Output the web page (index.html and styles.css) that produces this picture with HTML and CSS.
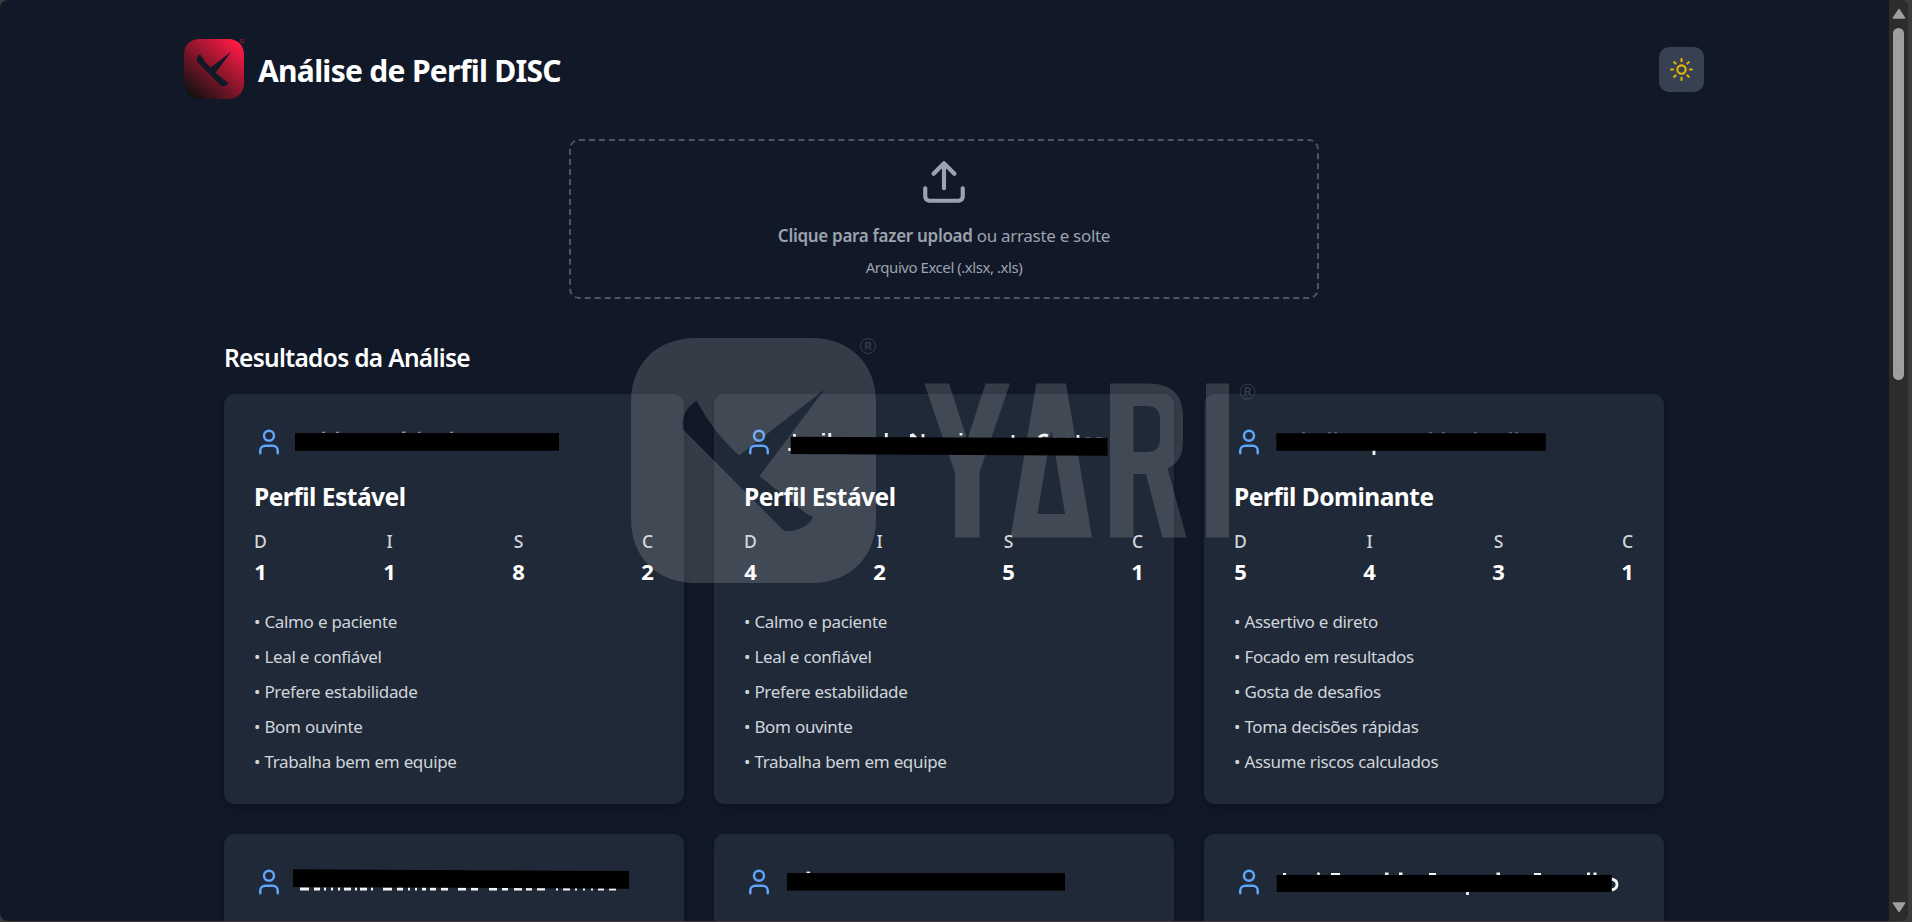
FILE: index.html
```html
<!DOCTYPE html>
<html lang="pt-BR">
<head>
<meta charset="utf-8">
<title>Análise de Perfil DISC</title>
<link rel="stylesheet" href="styles.css">
</head>
<body>
<svg class="defs" aria-hidden="true">
  <defs>
    <linearGradient id="brand" x1="0.12" y1="0.95" x2="0.88" y2="0.08">
      <stop offset="0" stop-color="#111111"/><stop offset="1" stop-color="#fb1a44"/>
    </linearGradient>
    <path id="mark" fill-rule="evenodd" d="M64 0H181C219 0 245 26 245 64V181C245 219 219 245 181 245H64C26 245 0 219 0 181V64C0 26 26 0 64 0ZM65.600 62.700C55 69 50 80 52 91.300L152.500 192.500C165 195 178 188 182 179.300Q176 177 170 171.500L128.500 138L193 52L108 117.500Q82 94 65.600 62.700Z"/>
    <symbol id="user" viewBox="0 0 24 24"><path d="M19 21v-2a4 4 0 0 0-4-4H9a4 4 0 0 0-4 4v2"/><circle cx="12" cy="7" r="4"/></symbol>
  </defs>
</svg>
<div class="window">
  <main class="page">
    <header class="header">
      <div class="brand">
        <svg class="brand-logo" viewBox="0 0 245 245"><use href="#mark" fill="url(#brand)"/><circle cx="237" cy="8" r="7" fill="none" stroke="#6b1830" stroke-width="6"/></svg>
        <h1 class="title">Análise de Perfil DISC</h1>
      </div>
      <button class="theme" aria-label="Tema"><svg viewBox="0 0 24 24"><circle cx="12" cy="12" r="4"/><path d="M12 2v2M12 20v2M4.930 4.930l1.410 1.410M17.660 17.660l1.410 1.410M2 12h2M20 12h2M6.340 17.660l-1.410 1.410M19.070 4.930l-1.410 1.410"/></svg></button>
    </header>
    <section class="upload">
      <svg class="upload-icon" viewBox="0 0 24 24"><path d="M21 15v4a2 2 0 0 1-2 2H5a2 2 0 0 1-2-2v-4M17 8l-5-5-5 5M12 3v12"/></svg>
      <p class="upload-text"><b>Clique para fazer upload</b> ou arraste e solte</p>
      <p class="upload-hint">Arquivo Excel (.xlsx, .xls)</p>
    </section>
    <section class="results">
      <h2 class="results-title">Resultados da Análise</h2>
      <div class="grid">
        <article class="card">
          <div class="person"><svg class="person-icon"><use href="#user"/></svg>
            <svg class="redacted" viewBox="0 0 370 35"><path class="trace" d="M38 8.800h3M52 8.800h3M118 8.500h3.500M134 8.800h2.500M166 8.800h3"/><path d="M11 9h264v17.700H11z"/></svg></div>
          <h3 class="profile">Perfil Estável</h3>
          <div class="scores"><div><span>D</span><b>1</b></div><div><span>I</span><b>1</b></div><div><span>S</span><b>8</b></div><div><span>C</span><b>2</b></div></div>
          <ul class="traits"><li>• Calmo e paciente</li><li>• Leal e confiável</li><li>• Prefere estabilidade</li><li>• Bom ouvinte</li><li>• Trabalha bem em equipe</li></ul>
        </article>
        <article class="card">
          <div class="person"><svg class="person-icon"><use href="#user"/></svg>
            <svg class="redacted" viewBox="0 0 370 35"><path class="trace bright" d="M20.500 10v4M49.500 9v2.500M55.800 9v5M112.300 9v5M137.500 10v4M138 10l4 4M149 10v4M187 9v2.500M239 11v3M265 13.500q4-4 9-1.500M304 11v3M14.300 25.500h2.500"/><path class="trace dim" d="M279 14h5M291 14h5M311 14h6M322 14h6"/><path d="M16.700 12.700L333.700 14V31.700L16.700 30z"/></svg></div>
          <h3 class="profile">Perfil Estável</h3>
          <div class="scores"><div><span>D</span><b>4</b></div><div><span>I</span><b>2</b></div><div><span>S</span><b>5</b></div><div><span>C</span><b>1</b></div></div>
          <ul class="traits"><li>• Calmo e paciente</li><li>• Leal e confiável</li><li>• Prefere estabilidade</li><li>• Bom ouvinte</li><li>• Trabalha bem em equipe</li></ul>
        </article>
        <article class="card">
          <div class="person"><svg class="person-icon"><use href="#user"/></svg>
            <svg class="redacted" viewBox="0 0 370 35"><path class="trace dim" d="M38 9h3M64 9h3M70 9h3M165 9h3M178 9h3M210 9h3M245 9h3M251 9h3"/><path class="trace bright" d="M110 26v5"/><path d="M12.300 9.300h269.500v17.500h-269.500z"/></svg></div>
          <h3 class="profile">Perfil Dominante</h3>
          <div class="scores"><div><span>D</span><b>5</b></div><div><span>I</span><b>4</b></div><div><span>S</span><b>3</b></div><div><span>C</span><b>1</b></div></div>
          <ul class="traits"><li>• Assertivo e direto</li><li>• Focado em resultados</li><li>• Gosta de desafios</li><li>• Toma decisões rápidas</li><li>• Assume riscos calculados</li></ul>
        </article>
        <article class="card"><div class="person"><svg class="person-icon"><use href="#user"/></svg>
          <svg class="redacted" viewBox="0 0 370 35"><path class="trace bright" d="M16 25h9M30 25h6M40 25h2M47 25h2M54 25h2M60 25h7M71 25h2M76 25h7M87 25h2M99 25h9M113 25h6M124 25h2M131 25h2M138 25h4M146 25h6M157 25h7M174 25h8M187 25h7M205 25h8M218 25h6M230 25h8M242 25h6M253 25h8M272 25h2M279 25h7M291 25h2M299 25h2M307 25h2M314 25h6M325 25h7"/><path d="M9 5.300L345 7V24.700L9 23z"/></svg></div></article>
        <article class="card"><div class="person"><svg class="person-icon"><use href="#user"/></svg>
          <svg class="redacted" viewBox="0 0 370 35"><path class="trace bright" d="M32.500 9h3.500"/><path d="M13 9h278v17.500H13z"/></svg></div></article>
        <article class="card"><div class="person"><svg class="person-icon"><use href="#user"/></svg>
          <svg class="redacted" viewBox="0 0 370 35"><path class="trace bright" d="M19 10.500h3M53.500 10.500l2-1.500M67 10.500h9M121 10h3.500M135 10h3.500M165 10.500h7M232.500 10h3.500M270 10.500h7M323 10h3M329.500 10h3M203.500 27v4M347.500 15q5.500 1 5.500 5.500t-5.500 5.500"/><path d="M12.700 11h335v17h-335z"/></svg></div></article>
      </div>
    </section>
  </main>
  <svg class="watermark" viewBox="631 338 626 245" aria-hidden="true">
    <use href="#mark" x="631" y="338"/>
    <path fill-rule="evenodd" d="M924.300 383.500H949L967.300 440L985.500 383.500H1010L979.500 472V537.500H955V473ZM1036.300 383.500H1066L1092 537.500H1010.500ZM1051.400 430L1037.500 514H1065ZM1110 383.500H1148C1172 383.500 1183 395 1183 417V440C1183 455 1179 463 1167.500 468.500L1186.500 537.500H1162.500L1146 474H1133.500V537.500H1110ZM1133.500 406V452H1146C1156 452 1160 448 1160 438V420C1160 410 1156 406 1146 406ZM1206 383.500H1229V537.500H1206Z"/>
    <g class="registered"><circle cx="868" cy="346" r="7.500"/><text x="868" y="349.500">R</text><circle cx="1247.500" cy="391.700" r="7.500"/><text x="1247.500" y="395.200">R</text></g>
  </svg>
  <aside class="scrollbar" aria-hidden="true">
    <svg viewBox="0 0 12 10"><path d="M6 1L11 8.500H1z"/></svg>
    <i class="thumb"></i>
    <svg class="down" viewBox="0 0 12 10"><path d="M6 9L11 1.500H1z"/></svg>
  </aside>
</div>
</body>
</html>
```
FILE: styles.css
```css
* { box-sizing: border-box; margin: 0; padding: 0; }
body { background: #3b3b3b; font-family: "Segoe UI", "Noto Sans", "Open Sans", sans-serif; color: #fff; height: 922px; overflow: hidden; }
.defs { position: absolute; width: 0; height: 0; }
.window { display: flex; width: 1908px; height: 921px; overflow: hidden; background: #111827; border-radius: 8px; }
.page { flex: 1; min-width: 0; padding: 39px 184px 0; }
.header { display: flex; align-items: center; justify-content: space-between; height: 60px; width: 1520px; }
.brand { display: flex; align-items: center; gap: 14px; }
.brand-logo { width: 60px; height: 60px; }
.title { font-size: 30px; line-height: 40px; font-weight: 700; letter-spacing: -0.7px; padding-top: 3px; }
.theme { width: 45px; height: 45px; border: 0; border-radius: 10px; background: #374151; display: grid; place-items: center; }
.theme svg { width: 25px; height: 25px; fill: none; stroke: #eab308; stroke-width: 2; stroke-linecap: round; }
.upload { width: 750px; height: 160px; margin: 40px 0 0 385px; border: 2px dashed #4b5563; border-radius: 10px; display: flex; flex-direction: column; align-items: center; padding-top: 16px; color: #9ca3af; }
.upload-icon { width: 50px; height: 50px; fill: none; stroke: currentColor; stroke-width: 2; stroke-linecap: round; stroke-linejoin: round; }
.upload-text { margin-top: 16px; font-size: 17px; line-height: 25px; letter-spacing: -0.3px; }
.upload-text b { font-weight: 600; }
.upload-hint { margin-top: 9px; font-size: 15px; line-height: 20px; letter-spacing: -0.45px; }
.results { width: 1440px; margin: 40px 0 0 40px; }
.results-title { font-size: 24.500px; line-height: 35px; font-weight: 600; letter-spacing: -0.7px; padding-top: 1px; height: 35px; }
.grid { margin-top: 20px; display: grid; grid-template-columns: repeat(3, 460px); gap: 30px; }
.card { height: 410px; padding: 30px; background: #1f2937; border-radius: 10px; box-shadow: 0 5px 8px -1px rgba(0, 0, 0, .18), 0 2px 5px -2px rgba(0, 0, 0, .18); }
.person { display: flex; align-items: center; height: 35px; }
.person-icon { width: 30px; height: 30px; flex: none; fill: none; stroke: #60a5fa; stroke-width: 2; stroke-linecap: round; stroke-linejoin: round; }
.redacted { position: relative; z-index: 2; width: 370px; height: 35px; fill: #000; }
.trace { fill: none; stroke: #8d939c; stroke-width: 2; }
.trace.bright { stroke: #f3f4f6; stroke-width: 2.800; }
.trace.dim { stroke: #596070; }
.profile { margin-top: 20px; font-size: 24.500px; line-height: 35px; font-weight: 700; letter-spacing: -0.5px; }
.scores { margin-top: 15px; display: flex; justify-content: space-between; }
.scores div { width: 13px; display: flex; flex-direction: column; align-items: center; }
.scores span { font-size: 17.500px; line-height: 25px; color: #d1d5db; font-weight: 500; }
.scores b { font-size: 22px; line-height: 35px; font-weight: 700; }
.traits { margin-top: 20px; list-style: none; display: flex; flex-direction: column; gap: 10px; color: #d1d5db; font-size: 17px; line-height: 25px; letter-spacing: -0.35px; word-spacing: 0.3px; }
.watermark { position: absolute; z-index: 1; left: 631px; top: 338px; width: 626px; height: 245px; overflow: visible; fill: #ebebeb; opacity: .165; pointer-events: none; }
.registered circle { fill: none; stroke: #ebebeb; stroke-width: 1; }
.registered text { font: 700 10px "Liberation Sans", sans-serif; text-anchor: middle; }
.scrollbar { width: 19px; background: #2c2c2c; display: flex; flex-direction: column; align-items: center; padding: 8px 0 8px; }
.scrollbar svg { width: 14px; height: 12px; fill: #9f9f9f; stroke: #9f9f9f; stroke-width: 1; stroke-linejoin: round; }
.thumb { width: 11px; height: 352px; margin-top: 8px; border-radius: 6px; background: #9f9f9f; }
.scrollbar .down { margin-top: auto; }
```
